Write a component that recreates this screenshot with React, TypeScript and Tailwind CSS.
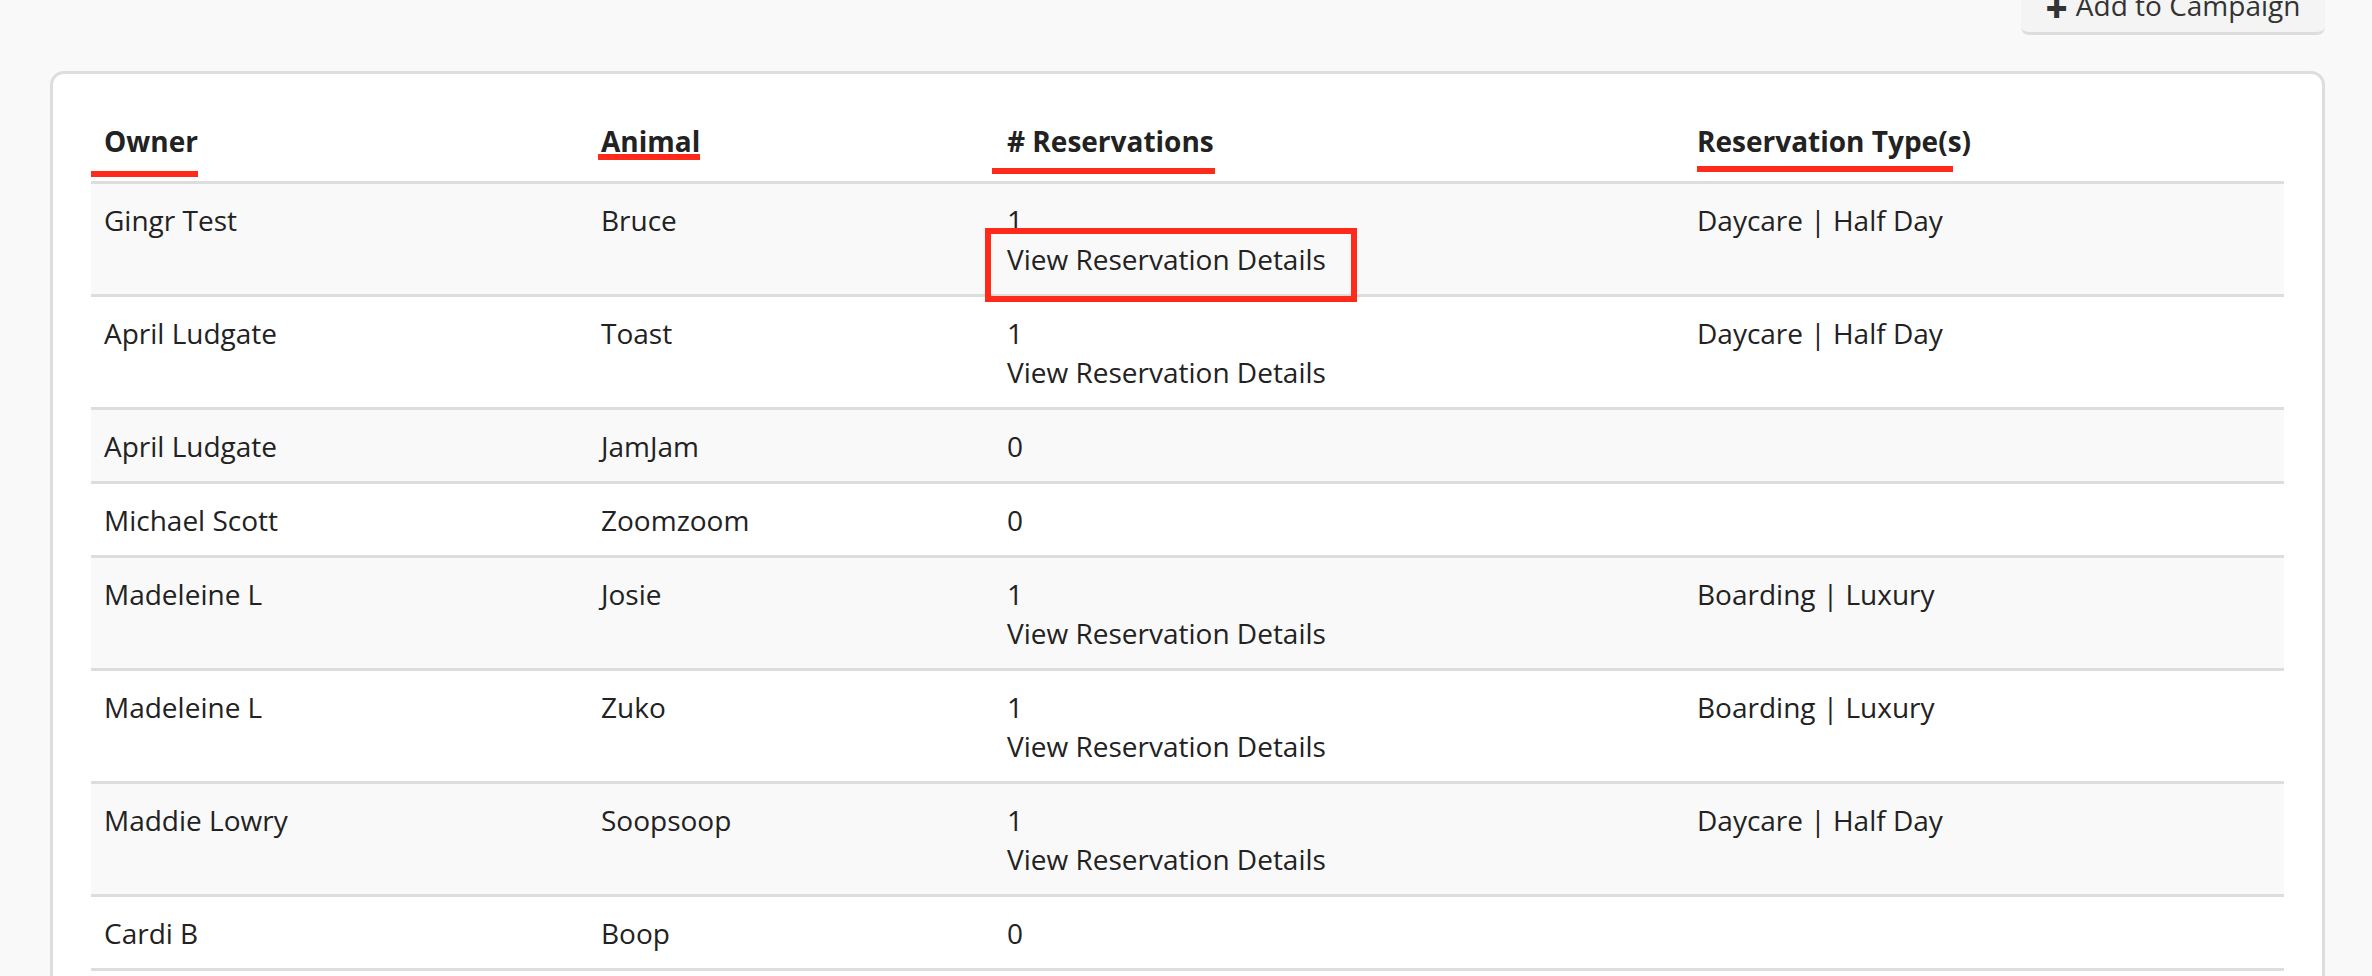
import React from "react";

const rows = [
  ["Gingr Test", "Bruce", "1", true, "Daycare | Half Day"],
  ["April Ludgate", "Toast", "1", true, "Daycare | Half Day"],
  ["April Ludgate", "JamJam", "0", false, ""],
  ["Michael Scott", "Zoomzoom", "0", false, ""],
  ["Madeleine L", "Josie", "1", true, "Boarding | Luxury"],
  ["Madeleine L", "Zuko", "1", true, "Boarding | Luxury"],
  ["Maddie Lowry", "Soopsoop", "1", true, "Daycare | Half Day"],
  ["Cardi B", "Boop", "0", false, ""],
] as const;

export default function App() {
  return (
    <div className="relative w-[2372px] h-[976px] overflow-hidden bg-[#f9f9f9] text-[#222]" style={{ fontFamily: '"Open Sans", sans-serif' }}>
      <div className="flex justify-end pr-[47px]">
        <div className="-mt-[20px] w-[304px] h-[55px] rounded-b-[8px] bg-[#f4f4f4] border-b-[3px] border-[#ddd] flex items-end justify-center pb-[6px] text-[28px] text-[#333]">
          <span className="font-extrabold text-[38px] leading-none mr-[8px]">+</span>Add to Campaign
        </div>
      </div>
      <div className="mt-[36px] ml-[50px] w-[2275px] h-[1000px] bg-white border-[3px] border-[#ddd] rounded-[14px] px-[38px] pt-[48px]">
        <table className="w-full border-collapse text-[28px] leading-[39px]">
          <thead>
            <tr className="border-b-[3px] border-[#ddd]">
              <th className="text-left font-bold pl-[13px] w-[510px] pb-[20px]">Owner</th>
              <th className="text-left font-bold w-[406px] pb-[20px]">Animal</th>
              <th className="text-left font-bold w-[690px] pb-[20px]"># Reservations</th>
              <th className="text-left font-bold pb-[20px]">Reservation Type(s)</th>
            </tr>
          </thead>
          <tbody>
            {rows.map((r, i) => (
              <tr key={i} className={`border-b-[3px] border-[#ddd] align-top ${i % 2 === 0 ? "bg-[#f9f9f9]" : "bg-white"}`}>
                <td className="pl-[13px] pt-[17px] pb-[15px]">{r[0]}</td>
                <td className="pt-[17px] pb-[15px]">{r[1]}</td>
                <td className="pt-[17px] pb-[15px]">
                  <div>{r[2]}</div>
                  {r[3] && <div>View Reservation Details</div>}
                </td>
                <td className="pt-[17px] pb-[15px]">{r[4]}</td>
              </tr>
            ))}
          </tbody>
        </table>
      </div>
      <div className="absolute left-[91px] top-[171px] w-[107px] h-[6px] bg-[#ff2a1a]" />
      <div className="absolute left-[598px] top-[154px] w-[102px] h-[6px] bg-[#ff2a1a]" />
      <div className="absolute left-[992px] top-[168px] w-[223px] h-[6px] bg-[#ff2a1a]" />
      <div className="absolute left-[1697px] top-[166px] w-[256px] h-[6px] bg-[#ff2a1a]" />
      <div className="absolute left-[985px] top-[228px] w-[372px] h-[74px] border-[6px] border-[#ff2a1a]" />
    </div>
  );
}
